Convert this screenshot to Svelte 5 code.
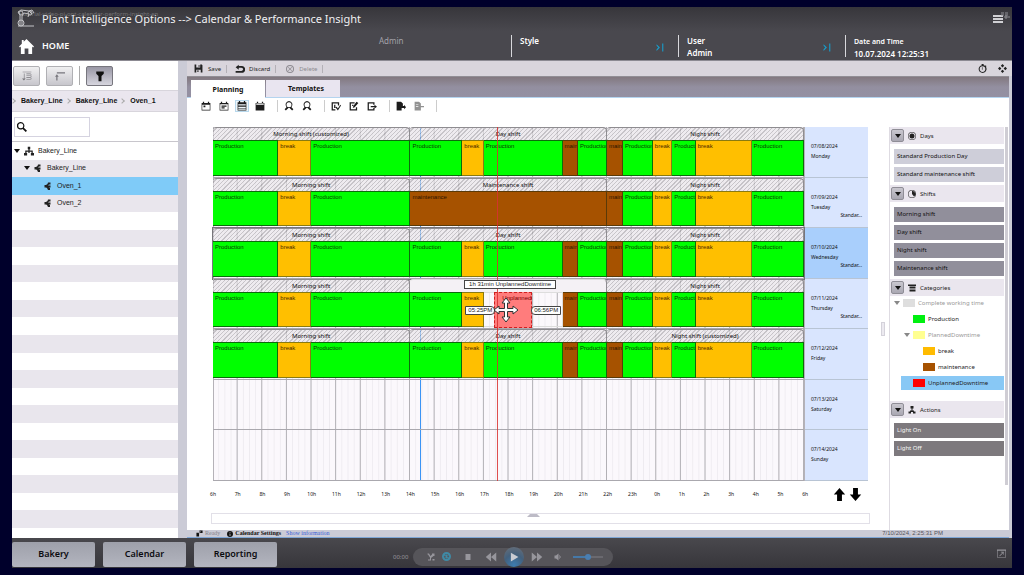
<script lang="ts">
  type Block = { kind: string; size: number };

  const icons: Record<string, string> = {
    save: "M1 1h13l1 1v13H1zM4 1v5h7V1zM4 10v5h8v-5zM8 2h2v3H8zM6 11h2v3H6z",
    undo: "M6 1L1 5l5 4V6h4c4 0 4 5 0 5H1v3h10c7 0 7-11 0-11H6z",
    remove: "M8 0a8 8 0 100 16A8 8 0 008 0zm0 2a6 6 0 110 12A6 6 0 018 2zM5 4L4 5l3 3-3 3 1 1 3-3 3 3 1-1-3-3 3-3-1-1-3 3z",
    month: "M3 1h2v2h6V1h2v2h2v12H1V3h2zM2 6v8h12V6zM4 7h3v3H4z",
    week: "M3 1h2v2h6V1h2v2h2v12H1V3h2zM2 5v9h12V5zM4 7h8v2H4zM4 10h5v2H4z",
    list: "M3 0h2v2h6V0h2v2h2v13H1V2h2zM2 5v2h12V5zM2 9v2h12V9zM2 12v2h12v-2z",
    day: "M3 1h2v2h6V1h2v2h2v12H1V3h2zM2 4v2h12V4z",
    zoom: "M8 0a6 6 0 014 10l3 3-2 2-4-4a6 6 0 01-2 0l-4 4-2-2 3-3A6 6 0 018 0zm0 2a4 4 0 100 8 4 4 0 000-8z",
    check: "M1 2h12v5h-2V4H3v9h4v2H1zM5 6h2v5H5zM7 10l2-1 2 3 4-6 1 1-5 8z",
    edit: "M1 2h8v2H3v9h8v-3h2v5H1zM12 1l3 2-6 7-3 1 1-3zM5 6h2v2H5z",
    forward: "M1 2h11v4h-2V4H3v9h7v-2h2v4H1zM6 8h6V6l4 3-4 3v-2H6z",
    out: "M1 1h7l3 3v4h2V6l3 4-3 3v-2H9v4H1z",
    into: "M1 1h7l3 3v4h5v2h-5v5H1zM3 5h4v1H3zM3 8h4v1H3z",
    home: "M8 0l8 8-1 1-1-1v8h-4v-6H6v6H2V8L1 9 0 8l3-3V1h2v2z",
    filter: "M3 2h10v3L10 8v7H6V8L3 5z",
    levels: "M1 1h14v1H1zM3 4h1v8h2l-3 3-3-3h3zM7 4h8v1H7zM7 7h8v1H7zM7 10h8v1H7zM7 13h8v1H7zM14 4h1v10h-1z",
    top: "M3 2h13v2H3zM3 5l3 4H4v6H2V9H0z",
    search: "M6 0a6 6 0 015 9l5 5-2 2-5-5A6 6 0 116 0zm0 2a4 4 0 100 8 4 4 0 000-8z",
    plant: "M6 1h4v4H9v2h5v4h2v4h-5v-4h1V9H9v2H7V9H4v2h1v4H0v-4h2V7h5V5H6z",
    unit: "M8 1h5v4h-3L8 7h5v4H9l3 1v4H8l-2-4-2-1H1V6h3l3-2z",
    watch: "M6 0h4v2l3 1 1-1 1 2-1 1a7 7 0 11-7-3zM8 4a5 5 0 100 10A5 5 0 008 4zM8 5v5H7V6z",
    move: "M8 0l3 3-3 3-3-3zM8 10l3 3-3 3-3-3zM3 5l3 3-3 3-3-3zM13 5l3 3-3 3-3-3z",
    sun: "M8 0a8 8 0 100 16A8 8 0 008 0zm0 1a7 7 0 110 14A7 7 0 018 1zM8 3a5 5 0 100 10A5 5 0 008 3z",
    shift: "M8 0a8 8 0 100 16A8 8 0 008 0zm0 1a7 7 0 110 14A7 7 0 018 1zM8 2v6l4 5A6 6 0 008 2z",
    category: "M0 1h16v3H0zM3 5h12v3H3zM3 9h12v2H3zM3 12h12v3H3z",
    action: "M5 0h6v5H9v4h3v2h3v4h-5v-3H6v3H1v-4h3V9h3V5H5z",
    arrowUp: "M8 0l7 8h-4v8H5V8H1z",
    arrowDown: "M8 16l7-8h-4V0H5v8H1z",
    link: "M1 6h6v9H1zM8 1h7v6H8zM6 7l4-4 1 1-4 4z",
    info: "M8 0a8 8 0 100 16A8 8 0 008 0zM7 3h2v2H7zM6 7h3v6H7V8H6z",
    next: "M1 2l6 6-6 6v-3l3-3-3-3zM11 1h2v14h-2z",
    rewind: "M8 2v12L1 8zM15 2v12L8 8z",
    fast: "M1 2l7 6-7 6zM8 2l7 6-7 6z",
    play: "M3 1l12 7-12 7z",
    stop: "M3 2h10v12H3z",
    loop: "M8 0a8 8 0 100 16A8 8 0 008 0zM5 5a4 4 0 017 2h1l-2 3-2-3h1a2 2 0 00-4-1zM3 9l2-3 2 3H6a2 2 0 004 1l1 1a4 4 0 01-7-2z",
    volume: "M1 5h3l5-4v14l-5-4H1zM11 4h1v8h-1zM13 6h1v4h-1z",
    shuffle: "M1 1h3l3 5 3-3V1h5v5h-2L8 10v5H2v-2h4V9L2 3H1zM11 12h4v3h-4z",
    full: "M0 1h16v14H0zM1 3v11h14V3zM4 12l6-6H7V5h5v5h-1V7l-6 6z",
  };

  const tree = [
    { name: "Bakery_Line", level: 0, icon: "plant", open: true },
    { name: "Bakery_Line", level: 1, icon: "unit", open: true },
    { name: "Oven_1", level: 2, icon: "unit", selected: true },
    { name: "Oven_2", level: 2, icon: "unit" },
  ];
  const emptyRows = Array(19).fill(0);

  const labels: Record<string, string> = {
    production: "Production",
    break: "break",
    maintenance: "maintenance",
    short: "main",
    blank: "",
  };

  const b = (kind: string, size: number): Block => ({ kind, size });

  const morning = [b("production", 131), b("break", 66), b("production", 199)];
  const day = [b("production", 104), b("break", 43), b("production", 158), b("short", 31), b("production", 58)];
  const downtime = [b("production", 104), b("break", 43), b("blank", 158), b("short", 31), b("production", 58)];
  const night = [
    b("short", 32), b("production", 60), b("break", 39), b("production", 47), b("break", 112), b("production", 105),
  ];
  const total = 1185;

  const days = [
    { date: "07/08/2024", name: "Monday", note: "", shifts: ["Morning shift (customized)", "Day shift", "Night shift"], blocks: [...morning, ...day, ...night] },
    { date: "07/09/2024", name: "Tuesday", note: "Standar...", shifts: ["Morning shift", "Maintenance shift", "Night shift"], blocks: [...morning, b("maintenance", 394), ...night] },
    { date: "07/10/2024", name: "Wednesday", note: "Standar...", shifts: ["Morning shift", "Day shift", "Night shift"], blocks: [...morning, ...day, ...night], selected: true },
    { date: "07/11/2024", name: "Thursday", note: "Standar...", shifts: ["Morning shift", "", "Night shift"], blocks: [...morning, ...downtime, ...night], dragging: true },
    { date: "07/12/2024", name: "Friday", note: "", shifts: ["Morning shift", "Day shift", "Night shift (customized)"], blocks: [...morning, ...day, ...night] },
    { date: "07/13/2024", name: "Saturday", note: "", shifts: [], blocks: [] },
    { date: "07/14/2024", name: "Sunday", note: "", shifts: [], blocks: [] },
  ];

  const hours = Array.from({ length: 25 }, (_, i) => `${(i + 6) % 24}h`);

  const toolGroups = [
    ["month", "week", "list", "day"],
    ["zoom", "zoom"],
    ["check", "edit", "forward"],
    ["out", "into"],
  ];

  const categories = [
    { name: "Complete working time", color: "#dedede", level: 0, open: true, dim: true },
    { name: "Production", color: "#00f010", level: 1 },
    { name: "PlannedDowntime", color: "#ffff91", level: 1, open: true, dim: true },
    { name: "break", color: "#ffbb00", level: 2 },
    { name: "maintenance", color: "#a65200", level: 2 },
    { name: "UnplannedDowntime", color: "#ff0000", level: 1, selected: true },
  ];
</script>

{#snippet icon(name: string, size = 10)}
  <svg class="icon" width={size} height={size} viewBox="0 0 16 16" aria-hidden="true">
    <path d={icons[name]} fill="currentColor" fill-rule="evenodd" />
  </svg>
{/snippet}

{#snippet section(title: string, iconName: string)}
  <header class="section-head">
    <button class="toggle" aria-label="Toggle {title}"><i class="caret"></i></button>
    {@render icon(iconName, 8)}
    <h2>{title}</h2>
  </header>
{/snippet}

<div class="page">
  <header class="top">
    <div class="title-row">
      <svg class="robot" width="18" height="19" viewBox="0 0 18 19" aria-hidden="true">
        <path d="M3 16V6L1 3l3-2 8 1 3 3M5 16V7l2-3 5 1M1 17h16M12 2l3-1 2 3M12 5l-1 3" />
        <circle cx="4" cy="4" r="2" /><circle cx="4" cy="14" r="3" /><circle cx="13" cy="4" r="2" />
      </svg>
      <h1>Plant Intelligence Options --&gt; Calendar &amp; Performance Insight</h1>
      <span class="file-name">tutorial-video-pi-opt-calendar-perform-insight-en</span>
      <svg class="menu" width="18" height="13" viewBox="0 0 18 13" aria-hidden="true">
        <path d="M1 4h10M1 7h10M1 10h10" stroke="#d0d0d4" stroke-width="2" />
        <path d="M9 1h3M13 1h3M9 3h3M13 3h3M12 5h6M14 3v4" stroke="#8e8e94" stroke-width="1" />
      </svg>
    </div>
    <div class="info-row">
      <a class="home" href="#home">{@render icon("home", 15)}HOME</a>
      <span class="who">Admin</span>
      <div class="cell"><b>Style</b><span class="next">{@render icon("next", 9)}</span></div>
      <div class="cell"><b>User<br />Admin</b><span class="next">{@render icon("next", 9)}</span></div>
      <div class="cell"><b><small>Date and Time</small><br />10.07.2024 12:25:31</b></div>
    </div>
  </header>

  <main>
    <nav class="left">
      <div class="left-tools">
        <button aria-label="Levels">{@render icon("levels")}</button>
        <button aria-label="Top level">{@render icon("top")}</button>
        <i class="sep"></i>
        <button class="on" aria-label="Filter">{@render icon("filter", 12)}</button>
      </div>
      <div class="crumbs">
        <i></i><a href="#line">Bakery_Line</a><i></i><a href="#line1">Bakery_Line</a><i></i><a href="#oven">Oven_1</a>
      </div>
      <label class="search">
        {@render icon("search")}
        <input type="text" aria-label="Search" />
      </label>
      <div class="tree">
        {#each tree as node}
          <div class="node level{node.level}" class:selected={node.selected}>
            {#if node.open}<i class="caret"></i>{/if}
            {@render icon(node.icon, node.level ? 8 : 10)}
            <span>{node.name}</span>
          </div>
        {/each}
        {#each emptyRows as _}
          <div class="node"></div>
        {/each}
      </div>
    </nav>

    <section class="work">
      <div class="actions">
        <button>{@render icon("save", 9)}Save</button>
        <button class="discard">{@render icon("undo", 10)}Discard</button>
        <button class="delete" disabled>{@render icon("remove", 8)}Delete</button>
        <span class="right-icons">{@render icon("watch", 9)}{@render icon("move", 9)}</span>
      </div>
      <div class="tabs">
        <button class="tab active">Planning</button>
        <button class="tab templates">Templates</button>
      </div>

      <div class="panel">
        <div class="tools">
          {#each toolGroups as group}
            <div class="group">
              {#each group as tool}
                <button class:current={tool === "list"} class:faded={tool === "into"} aria-label={tool}>
                  {@render icon(tool, 10)}
                </button>
              {/each}
            </div>
          {/each}
        </div>

        <div class="columns">
          <div class="planner">
            <div class="calendar">
              <div class="rows">
                <i class="marker blue"></i>
                {#each days as d}
                  <div class="row" class:chosen={d.selected}>
                    {#if d.blocks.length}
                      <div class="shifts">
                        {#each d.shifts as shift}
                          <div class="shift" class:plain={!shift}>{shift}</div>
                        {/each}
                      </div>
                      <div class="blocks">
                        {#each d.blocks as block}
                          <div class="block {block.kind}" style="width: {(block.size / total) * 100}%">{labels[block.kind]}</div>
                        {/each}
                      </div>
                    {/if}
                    {#if d.dragging}
                      <div class="drag">
                        <span>Unplanned</span>
                        <em class="tip over">1h 31min UnplannedDowntime</em>
                        <em class="tip start">05:25PM</em>
                        <em class="tip end">06:56PM</em>
                        <svg class="cursor" width="26" height="26" viewBox="0 0 26 26" aria-hidden="true">
                          <path d="M13 1l4 5h-2.500v5.500H20V9l5 4-5 4v-2.500h-5.500V20H17l-4 5-4-5h2.500v-5.500H6V17l-5-4 5-4v2.500h5.500V6H9z" />
                        </svg>
                      </div>
                    {/if}
                  </div>
                {/each}
                <i class="marker red"></i>
              </div>
              <div class="dates">
                {#each days as d}
                  <div class="date" class:chosen={d.selected}>
                    <span>{d.date}</span>
                    <span>{d.name}</span>
                    <span class="note">{d.note}</span>
                  </div>
                {/each}
              </div>
            </div>
            <div class="scale">
              <div class="scale-line">
                <div class="hours">
                  {#each hours as hour}<span>{hour}</span>{/each}
                </div>
              </div>
              <div class="jump">
                <button aria-label="Earlier">{@render icon("arrowUp", 13)}</button>
                <button aria-label="Later">{@render icon("arrowDown", 13)}</button>
              </div>
            </div>
            <div class="drawer"><i></i></div>
          </div>

          <i class="splitter"></i>

          <aside>
            {@render section("Days", "sun")}
            <ul class="items light">
              <li>Standard Production Day</li>
              <li>Standard maintenance shift</li>
            </ul>
            {@render section("Shifts", "shift")}
            <ul class="items">
              <li>Morning shift</li>
              <li>Day shift</li>
              <li>Night shift</li>
              <li>Maintenance shift</li>
            </ul>
            {@render section("Categories", "category")}
            <div class="categories">
              {#each categories as c}
                <div class="category depth{c.level}" class:dim={c.dim} class:selected={c.selected}>
                  <i class="caret" class:hidden={!c.open}></i>
                  <i class="swatch" style="background: {c.color}"></i>
                  <span>{c.name}</span>
                </div>
              {/each}
            </div>
            {@render section("Actions", "action")}
            <ul class="items dark">
              <li>Light On</li>
              <li>Light Off</li>
            </ul>
            <i class="scrollbar"></i>
          </aside>
        </div>
      </div>

      <footer class="status">
        {@render icon("link", 7)}
        <span class="ready">Ready</span>
        {@render icon("info", 6)}
        <b>Calendar Settings</b>
        <a href="#info">Show information</a>
        <time>7/10/2024, 2:25:31 PM</time>
      </footer>
    </section>
  </main>

  <footer class="bottom">
    <button class="big">Bakery</button>
    <button class="big">Calendar</button>
    <button class="big">Reporting</button>
    <span class="clock">00:00</span>
    <div class="player">
      <button aria-label="Shuffle">{@render icon("shuffle", 8)}</button>
      <button class="loop" aria-label="Repeat">{@render icon("loop", 9)}</button>
      <button class="stop" aria-label="Stop">{@render icon("stop", 8)}</button>
      <button aria-label="Rewind">{@render icon("rewind", 12)}</button>
      <button class="play" aria-label="Play">{@render icon("play", 10)}</button>
      <button aria-label="Fast forward">{@render icon("fast", 12)}</button>
      <button class="mute" aria-label="Mute">{@render icon("volume", 8)}</button>
      <input type="range" aria-label="Volume" value="50" />
    </div>
    <button class="full" aria-label="Full screen">{@render icon("full", 9)}</button>
  </footer>
</div>

<style>
  :global(body) {
    background: #00002b;
  }

  .page {
    display: flex;
    flex-direction: column;
    box-sizing: border-box;
    min-height: 100vh;
    padding: 7px 12px;
    font-family: "Noto Sans", sans-serif;
    font-size: 6px;
    line-height: 8px;
    color: #222;
  }

  button {
    display: flex;
    align-items: center;
    justify-content: center;
    padding: 0;
    border: 0;
    background: none;
    font: inherit;
    color: inherit;
  }

  a {
    color: inherit;
    text-decoration: none;
  }

  .icon {
    flex: none;
    display: block;
  }

  .caret {
    flex: none;
    border: 3px solid transparent;
    border-top: 4px solid #111;
    border-bottom: 0;
  }

  .hidden {
    visibility: hidden;
  }

  /* header */
  .top {
    height: 53px;
    background: linear-gradient(#37363b, #49484e 45%);
    border-bottom: 1px solid #8c8a92;
    color: #fff;
  }

  .title-row {
    position: relative;
    display: flex;
    align-items: center;
    height: 23px;
    padding: 0 2px 0 5px;
  }

  .robot {
    fill: none;
    stroke: #c4c4c8;
  }

  h1 {
    flex: 1;
    margin: 0 0 0 7px;
    font-size: 11px;
    font-weight: 400;
    line-height: 16px;
    color: #f0f0f2;
  }

  .file-name {
    position: absolute;
    left: 8px;
    top: 3px;
    color: #aaa;
    opacity: 0.5;
  }

  .info-row {
    display: flex;
    height: 30px;
  }

  .home {
    display: flex;
    align-items: center;
    gap: 8px;
    width: 360px;
    padding: 2px 0 0 7px;
    font-size: 9px;
    font-weight: 600;
  }

  .who {
    flex: 1;
    padding-top: 7px;
    font-size: 8px;
    color: #a3a2a9;
  }

  .cell {
    display: flex;
    justify-content: space-between;
    box-sizing: border-box;
    width: 167px;
    height: 22px;
    margin-top: 5px;
    padding: 0 13px 0 8px;
    border-left: 1px solid #d8d8dc;
    font-size: 8px;
    line-height: 12px;
    white-space: nowrap;
  }

  .cell b {
    font-weight: 600;
  }

  .cell small {
    font-size: 7px;
  }

  .next {
    align-self: center;
    padding-top: 3px;
    color: #199bc8;
  }

  main {
    flex: 1;
    display: flex;
  }

  /* equipment tree */
  .left {
    display: flex;
    flex-direction: column;
    width: 166px;
    background: #fff;
    font-family: "Liberation Sans", sans-serif;
    font-size: 7px;
  }

  .left-tools {
    display: flex;
    align-items: center;
    gap: 6px;
    height: 29px;
    padding-left: 1px;
  }

  .left-tools button {
    box-sizing: border-box;
    width: 27px;
    height: 20px;
    border: 1px solid #b0b0b4;
    border-radius: 2px;
    background: linear-gradient(#f0f0f1, #c7c6cc);
    color: #77767c;
  }

  .left-tools button.on {
    border-color: #77767e;
    background: linear-gradient(#9997a5, #d6d5de);
    color: #111;
  }

  .sep {
    width: 1px;
    height: 19px;
    background: #aaa;
  }

  .crumbs {
    display: flex;
    align-items: center;
    height: 20px;
    border: solid #d8d5dc;
    border-width: 1px 0;
    background: #eae6ee;
    font-weight: 600;
    color: #111;
  }

  .crumbs i {
    width: 3px;
    height: 3px;
    margin: 0 6px 0 3px;
    border: solid #aaa;
    border-width: 1px 1px 0 0;
    transform: rotate(45deg);
  }

  .crumbs i:first-child {
    margin-left: -1px;
  }

  .search {
    display: flex;
    align-items: center;
    box-sizing: border-box;
    width: 76px;
    height: 20px;
    margin: 5px 2px 4px;
    padding-left: 2px;
    border: 1px solid #d5d3e0;
    color: #111;
  }

  .search input {
    width: 100%;
    min-width: 0;
    padding: 0;
    border: 0;
    outline: 0;
    background: none;
    font: inherit;
  }

  .tree {
    flex: 1;
    display: grid;
    grid-template-rows: repeat(22, 7fr) 4fr;
    border-top: 1px solid #c8c6cc;
  }

  .node {
    display: flex;
    align-items: center;
    gap: 4px;
    padding-left: 2px;
  }

  .node:nth-child(even) {
    background: #e9e6ed;
  }

  .node.level1 {
    padding-left: 12px;
  }

  .node.level2 {
    padding-left: 32px;
  }

  .node.level1 span,
  .node.level2 span {
    padding-left: 1px;
  }

  .node.selected {
    background: #7fcbf8;
  }

  .node:nth-child(4) {
    background: #e9e6ed;
  }

  /* work area */
  .work {
    flex: 1;
    display: flex;
    flex-direction: column;
    min-width: 0;
    padding: 0 3px 0 9px;
    background: #cbcbd6;
  }

  .actions {
    display: flex;
    align-items: center;
    height: 15px;
    margin: 0 -3px 0 0;
    padding-left: 7px;
    background: #d9d5dc;
    color: #222;
  }

  .actions button {
    gap: 5px;
    height: 8px;
    padding-right: 5px;
    border-right: 1px solid #b3b0b6;
  }

  .actions .discard {
    gap: 4px;
    margin-left: 8px;
  }

  .actions .delete {
    margin-left: 10px;
    color: #8d8b91;
  }

  .right-icons {
    display: flex;
    gap: 11px;
    margin: 0 5px 0 auto;
  }

  .tabs {
    display: flex;
    align-items: flex-end;
    gap: 1px;
    height: 20px;
    padding-left: 4px;
    border-top: 1px solid #918e95;
    border-bottom: 1px solid #b4d4ef;
    background: linear-gradient(#82787f, #938fa0 50%, #9490a2);
  }

  .tab {
    box-sizing: border-box;
    width: 74px;
    height: 17px;
    background: #e9e5f0;
    font-size: 7px;
    font-weight: 700;
    color: #111;
  }

  .templates {
    padding-left: 6px;
  }

  .tab.active {
    height: 18px;
    margin-bottom: -1px;
    padding-top: 2px;
    background: #fff;
  }

  .panel {
    flex: 1;
    display: flex;
    flex-direction: column;
    background: #fff;
  }

  .tools {
    display: flex;
    height: 17px;
    margin-bottom: 12px;
    padding-left: 12px;
  }

  .group {
    display: flex;
    align-items: center;
    gap: 4px;
    height: 12px;
    margin-top: 2px;
    padding: 0 10px 0 0;
    border-right: 1px solid #ccc;
  }

  .group + .group {
    padding-left: 4px;
  }

  .group button {
    box-sizing: border-box;
    width: 14px;
    height: 12px;
    color: #1c1c1c;
  }

  .group .current {
    border: 1px solid #b8d8ec;
    background: #eef6fb;
  }

  .group .faded {
    color: #929292;
  }

  .columns {
    flex: 1;
    display: flex;
  }

  .planner {
    flex: 1;
    display: flex;
    flex-direction: column;
    min-width: 0;
    padding: 0 11px 6px 24px;
  }

  .calendar {
    flex: 1;
    display: flex;
    margin: 0 2px;
  }

  .rows {
    position: relative;
    flex: 1;
    display: grid;
    grid-template-rows: repeat(7, 1fr);
    isolation: isolate;
    box-sizing: border-box;
    border: 1px solid #b5b2b8;
    border-width: 0 1px 0 0;
    background-color: #fbf8fc;
    background-image:
      linear-gradient(to right, transparent calc(100% - 1px), #b2b0b5 0),
      linear-gradient(to right, transparent calc(100% - 1px), #eeebf0 0);
    background-size: calc(100% / 24) 100%, calc(100% / 96) 100%;
  }

  .row {
    position: relative;
    display: flex;
    flex-direction: column;
    border-bottom: 1px solid #aaa8ae;
    box-shadow: inset 1px 0 #b5b2b8;
  }

  .row.chosen {
    outline: 1px solid #77757a;
  }

  .shifts {
    display: flex;
    height: 13px;
  }

  .shift {
    flex: 1;
    box-sizing: border-box;
    border: 1px solid #8e8c90;
    border-width: 1px 1px 0 0;
    border-radius: 3px 4px 0 0;
    background: repeating-linear-gradient(135deg, #e6e3e799 0 2px, #a5a2a799 2px 3px);
    line-height: 12px;
    text-align: center;
    color: #111;
  }

  .shift.plain {
    border-top-color: #ddd;
    background: #f4f1f5;
  }

  .blocks {
    flex: 1;
    display: flex;
    margin-bottom: 1px;
    font-family: "Liberation Sans", sans-serif;
    color: #0a3505;
  }

  .block {
    flex: none;
    box-sizing: border-box;
    overflow: hidden;
    padding: 1px 0 0 2px;
    border: solid #0c6b0c;
    border-width: 1px 1px 1px 0;
    white-space: nowrap;
  }

  .production {
    background: #00ff00;
  }

  .break {
    border-color: #8a7a10;
    background: #ffbf00;
    color: #4a2a00;
  }

  .maintenance,
  .short {
    border-color: #5a3a08;
    background: #a65200;
    color: #2b1300;
  }

  .blank {
    border-color: #ddd;
  }

  .marker {
    position: absolute;
    top: 0;
    bottom: 0;
    width: 1px;
  }

  .blue {
    left: 35%;
    z-index: -1;
    background: #3b94f5;
  }

  .red {
    left: 48%;
    background: #d93030;
    opacity: 0.85;
  }

  /* block under the pointer while it is dragged */
  .drag {
    position: absolute;
    left: 47.6%;
    top: 13px;
    bottom: 0;
    box-sizing: border-box;
    width: 6.4%;
    border: 1px dashed #d02020;
    background: #ff7c7c;
    font-family: "Liberation Sans", sans-serif;
    color: #7a0000;
  }

  .drag span {
    display: block;
    padding: 1px 0 0 7px;
  }

  .tip {
    position: absolute;
    z-index: 2;
    box-sizing: border-box;
    height: 9px;
    padding: 0 2px;
    border: 1px solid #444;
    background: #fff;
    font-style: normal;
    line-height: 7px;
    white-space: nowrap;
    color: #222;
  }

  .over {
    right: -25px;
    top: -13px;
    padding: 0 4px;
  }

  .start {
    right: 100%;
    top: 13px;
    border-radius: 0 4px 4px 0;
  }

  .end {
    left: 100%;
    top: 13px;
    border-radius: 4px 0 0 4px;
  }

  .cursor {
    position: absolute;
    z-index: 3;
    left: -2px;
    top: 4px;
    fill: #fff;
    stroke: #333;
  }

  .dates {
    display: grid;
    grid-template-rows: repeat(7, 1fr);
    width: 63px;
  }

  .date {
    display: flex;
    flex-direction: column;
    padding: 14px 6px 0;
    border-bottom: 1px solid #b8c4d4;
    background: #d9e5fe;
    font-size: 5px;
    line-height: 10px;
    color: #111;
  }

  .date.chosen {
    background: #a9cffc;
  }

  .note {
    align-self: flex-end;
    line-height: 7px;
  }

  .scale {
    display: flex;
    align-items: center;
    height: 26px;
    margin: 0 2px;
  }

  .scale-line {
    flex: 1;
  }

  .hours {
    display: flex;
    width: calc(100% * 25 / 24);
    margin-left: calc(-100% / 48);
    font-size: 5px;
    color: #111;
  }

  .hours span {
    flex: 1;
    text-align: center;
  }

  .jump {
    display: flex;
    justify-content: flex-end;
    gap: 3px;
    box-sizing: border-box;
    width: 63px;
    padding-right: 6px;
    color: #000;
  }

  .drawer {
    height: 9px;
    margin-top: 6px;
    border: 1px solid #e2e0e8;
  }

  .drawer i {
    display: block;
    width: 7px;
    margin-left: 48%;
    border: 3px solid transparent;
    border-top: 0;
    border-bottom-color: #bdbbc6;
  }

  .splitter {
    align-self: center;
    box-sizing: border-box;
    width: 4px;
    height: 14px;
    margin-right: 4px;
    border: 1px solid #d4d2da;
    background: #eceaf0;
  }

  /* templates */
  aside {
    position: relative;
    box-sizing: border-box;
    width: 120px;
    padding-right: 5px;
    border-left: 1px solid #dedbe2;
  }

  .section-head {
    display: flex;
    align-items: center;
    gap: 4px;
    height: 17px;
    padding-left: 1px;
    background: #eae6ee;
  }

  .section-head h2 {
    margin: 0;
    font-size: 6px;
    font-weight: 400;
  }

  .toggle {
    box-sizing: border-box;
    width: 13px;
    height: 13px;
    border: 1px solid #8f8d96;
    border-radius: 2px;
    background: linear-gradient(#c9c7cf, #a9a7b2);
  }

  .items {
    display: grid;
    gap: 3px;
    margin: 0;
    padding: 5px 0 3px 4px;
    list-style: none;
  }

  .items li {
    padding-left: 3px;
    background: #918f9b;
    line-height: 15px;
    color: #111;
  }

  .items.light li {
    background: #ceced9;
  }

  .items.dark li {
    background: #7d797d;
    color: #f4f4f4;
  }

  .categories {
    padding-bottom: 9px;
  }

  .category {
    display: flex;
    align-items: center;
    gap: 3px;
    height: 14px;
    margin-bottom: 2px;
    padding-left: 4px;
  }

  .depth1 {
    padding-left: 14px;
  }

  .depth2 {
    padding-left: 24px;
  }

  .category.selected {
    margin-left: 11px;
    padding-left: 3px;
    background: #88c8f5;
  }

  .dim {
    color: #999;
  }

  .dim .caret {
    border-top-color: #888;
  }

  .swatch {
    width: 12px;
    height: 8px;
  }

  .scrollbar {
    position: absolute;
    right: 1px;
    top: 0;
    width: 3px;
    height: 358px;
    background: #cfcdd4;
  }

  .status {
    display: flex;
    align-items: center;
    gap: 2px;
    height: 7px;
    padding-left: 9px;
    border-bottom: 1px solid #7ea6d6;
    font-family: "Liberation Serif", serif;
    line-height: 7px;
    color: #111;
  }

  .ready {
    padding-right: 5px;
    color: #85838c;
  }

  .status a {
    padding-left: 3px;
    color: #3a5fd8;
  }

  .status time {
    margin: 0 66px 0 auto;
    font-family: "Liberation Sans", sans-serif;
    color: #55535c;
  }

  /* bottom bar */
  .bottom {
    display: flex;
    align-items: center;
    height: 30px;
    background: linear-gradient(#49484d, #37363b);
    color: #97969c;
  }

  .big {
    width: 83px;
    height: 25px;
    margin: 2px 8px 0 0;
    border-radius: 2px;
    background: linear-gradient(#9ea0aa, #b3b5bf);
    font-size: 9px;
    font-weight: 600;
    color: #0c0c10;
  }

  .clock {
    margin: 7px 5px 0 108px;
  }

  .player {
    display: flex;
    align-items: center;
    gap: 7px;
    box-sizing: border-box;
    width: 200px;
    height: 18px;
    margin-top: 7px;
    padding-left: 14px;
    border-radius: 9px;
    background: #56555a;
  }

  .stop {
    width: 20px;
  }

  .mute {
    width: 16px;
  }

  .play {
    width: 20px;
    height: 20px;
    border-radius: 50%;
    background: radial-gradient(circle at 50% 90%, #3d7cb0, #43607c 50%, #6b7078);
    color: #c9ccd2;
  }

  .loop {
    color: #3f8aa5;
  }

  .player input {
    appearance: none;
    width: 30px;
    height: 2px;
    margin: 0;
    background: linear-gradient(to right, #4679a8 50%, #6a696f 50%);
  }

  .player input::-webkit-slider-thumb {
    appearance: none;
    width: 6px;
    height: 6px;
    border-radius: 50%;
    background: #4a7fb2;
  }

  .full {
    margin: 0 6px 0 auto;
  }
</style>
